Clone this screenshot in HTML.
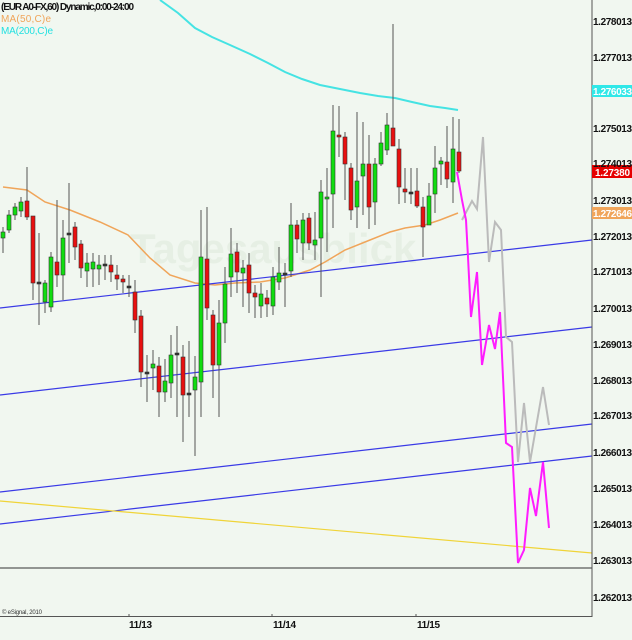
<!DOCTYPE html>
<html><head><meta charset="utf-8"><style>
html,body{margin:0;padding:0;background:#f1f7f0;}
svg{display:block;font-family:"Liberation Sans",sans-serif;}
</style></head><body>
<svg id="c" width="632" height="640" viewBox="0 0 632 640" xmlns="http://www.w3.org/2000/svg">
<rect width="632" height="640" fill="#f1f7f0"/>
<text x="130" y="263" font-size="42" font-weight="bold" fill="#e6efe4">Tagesausblick</text>
<polyline fill="none" stroke="#45e3e3" stroke-width="2" points="160,0 178,13 195,28 212,37 230,45 250,54 268,63 285,72 302,79 320,85 340,89 360,93 378,96 395,98 412,102 430,106 445,108 458,110"/>
<polyline fill="none" stroke="#f0a55a" stroke-width="1.5" points="3,187 27,190 45,202 70,210 100,222 128,235 150,258 170,275 195,283 215,285 235,283 260,282 285,278 310,270 325,262 345,250 370,240 390,232 405,228 425,225 440,220 458,213"/>
<g stroke="#3a3ae6" stroke-width="1.2">
<line x1="0" y1="308" x2="592" y2="240"/>
<line x1="0" y1="395" x2="592" y2="327"/>
<line x1="0" y1="492" x2="592" y2="424"/>
<line x1="0" y1="524" x2="592" y2="456"/>
</g>
<line x1="0" y1="501" x2="592" y2="553" stroke="#f0d438" stroke-width="1.2"/>
<line x1="0" y1="568" x2="592" y2="568" stroke="#333" stroke-width="1"/>
<g id="cs"></g>
<polyline fill="none" stroke="#bbbbbb" stroke-width="2" points="462,220 472,201 477,209 483,137 489,262 495,222 501,230 506,337 512,342 518,462 524,403 530,462 543,387 549,425"/>
<polyline fill="none" stroke="#ff1cff" stroke-width="2" points="457,172 462,200 466,220 468,257 471,317 477,272 482,365 489,325 495,349 500,312 506,443 512,447 518,563 524,550 530,488 536,516 543,462 549,528"/>
<line x1="592" y1="0" x2="592" y2="617" stroke="#555" stroke-width="1"/>
<line x1="0" y1="616.5" x2="592" y2="616.5" stroke="#555" stroke-width="1"/>
<g stroke="#555"><line x1="129" y1="614" x2="129" y2="617"/><line x1="272" y1="614" x2="272" y2="617"/><line x1="416" y1="614" x2="416" y2="617"/></g>
<rect x="592" y="85" width="40" height="12" fill="#30e8e8"/>
<rect x="592" y="165" width="40" height="13" fill="#e60000"/>
<rect x="592" y="207" width="40" height="12" fill="#f0a55a"/>
<g font-size="10" font-weight="bold" fill="#111">
<text x="593" y="25" textLength="39">1.278013</text>
<text x="593" y="61" textLength="39">1.277013</text>
<text x="593" y="95" textLength="39" fill="#fff">1.276033</text>
<text x="593" y="132" textLength="39">1.275013</text>
<text x="593" y="167" textLength="39">1.274013</text>
<text x="595" y="176" textLength="35" fill="#fff">1.27380</text>
<text x="593" y="204" textLength="39">1.273013</text>
<text x="593" y="217" textLength="39" fill="#fff">1.272646</text>
<text x="593" y="240" textLength="39">1.272013</text>
<text x="593" y="275" textLength="39">1.271013</text>
<text x="593" y="312" textLength="39">1.270013</text>
<text x="593" y="348" textLength="39">1.269013</text>
<text x="593" y="384" textLength="39">1.268013</text>
<text x="593" y="419" textLength="39">1.267013</text>
<text x="593" y="456" textLength="39">1.266013</text>
<text x="593" y="492" textLength="39">1.265013</text>
<text x="593" y="528" textLength="39">1.264013</text>
<text x="593" y="564" textLength="39">1.263013</text>
<text x="593" y="601" textLength="39">1.262013</text>
<text x="129" y="628" textLength="23">11/13</text>
<text x="273" y="628" textLength="23">11/14</text>
<text x="417" y="628" textLength="23">11/15</text>
<text x="1" y="10" textLength="133">(EUR A0-FX,60) Dynamic,0:00-24:00</text>
<text x="1" y="22" textLength="50" fill="#f0a55a" font-weight="normal">MA(50,C)e</text>
<text x="1" y="34" textLength="52" fill="#22e0e0" font-weight="normal">MA(200,C)e</text>
</g>
<text x="2" y="614" font-size="6" fill="#333" textLength="40">© eSignal, 2010</text>
</svg>
<script>
var d=[
["g",232,238,227,253],["g",215,230,210,233],["g",207,215,203,220],["g",202,211,197,217],["r",201,217,167,220],
["r",216,283,216,300],["d",282,282,233,325],["g",283,302,280,313],["g",257,307,252,312],["r",262,275,200,287],
["g",238,275,220,300],["d",233,233,183,263],["r",227,247,222,260],["r",244,268,240,278],["g",263,271,253,287],
["g",262,269,253,287],["g",265,269,255,285],["d",264,264,255,280],["r",265,272,255,282],["r",275,279,265,290],
["r",279,282,275,293],["d",286,286,275,297],["r",292,320,280,333],["r",316,372,310,387],["d",372,372,355,402],
["g",364,368,350,390],["r",366,392,357,417],["g",381,392,359,402],["g",355,383,335,398],["d",353,353,326,417],
["r",357,395,345,442],["d",393,393,341,417],["g",377,390,356,456],["g",257,382,210,417],["r",259,308,207,320],
["r",315,365,310,398],["g",323,365,300,417],["g",284,323,267,343],["g",254,277,228,297],["r",252,272,243,293],
["g",268,273,260,307],["r",265,293,253,313],["r",293,297,285,318],["g",294,306,283,318],["r",298,304,290,317],
["g",277,306,267,315],["g",273,282,247,290],["d",273,273,263,307],["g",225,271,203,277],["r",225,239,220,253],
["g",220,243,213,260],["r",218,243,213,250],["g",240,245,212,260],["g",192,238,180,297],["g",197,199,168,252],
["g",131,194,105,228],["r",135,137,106,157],["r",137,164,132,200],["r",168,210,163,220],["g",181,207,112,228],
["g",164,176,122,215],["r",164,207,135,229],["g",164,202,158,225],["g",143,164,132,166],["g",125,150,113,155],
["r",128,146,24,146],["r",149,187,139,204],["r",189,192,168,203],["d",192,192,168,204],["r",191,206,168,208],
["r",207,227,197,257],["g",196,225,183,223],["g",168,194,146,213],["g",161,164,157,185],["r",162,179,126,188],
["g",149,182,117,203],["r",152,171,119,173]];
var s="";
d.forEach(function(c,i){var x=3+6*i;
s+='<line x1="'+x+'" y1="'+c[3]+'" x2="'+x+'" y2="'+c[4]+'" stroke="#555" stroke-width="1"/>';
var h=Math.max(c[2]-c[1],2);var col=c[0]=="g"?"#10dd10":c[0]=="r"?"#e81010":"#333";
s+='<rect x="'+(x-2)+'" y="'+c[1]+'" width="4" height="'+h+'" fill="'+col+'" stroke="#333" stroke-width="0.6"/>';});
document.getElementById("cs").innerHTML=s;
</script>
</body></html>
